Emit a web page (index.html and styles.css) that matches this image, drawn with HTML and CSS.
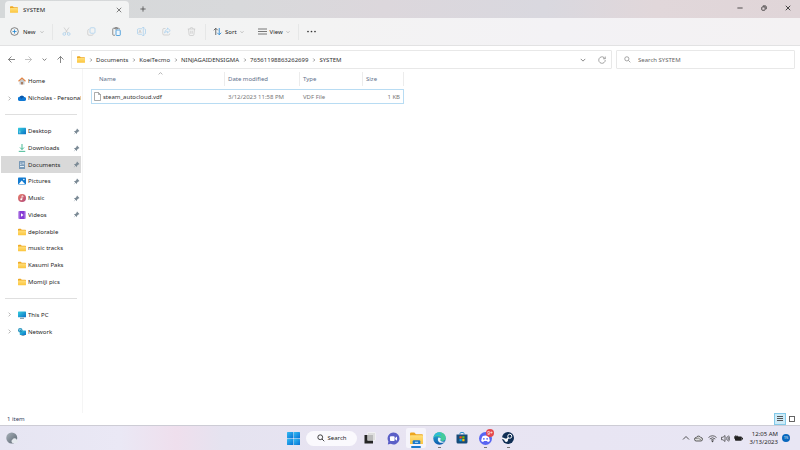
FILE: index.html
```html
<!DOCTYPE html>
<html lang="en">
<head>
<meta charset="utf-8">
<title>SYSTEM</title>
<link rel="stylesheet" href="styles.css">
</head>
<body>
<svg class="defs" aria-hidden="true">
  <linearGradient id="gFolder" x2="0" y2="1"><stop offset="0" stop-color="#ffdf7c"/><stop offset="1" stop-color="#fcc53d"/></linearGradient>
  <linearGradient id="gBlue" x2="1" y2="1"><stop offset="0" stop-color="#36d0e0"/><stop offset="1" stop-color="#0a6fc4"/></linearGradient>
  <linearGradient id="gWin" x2="1" y2="1"><stop offset="0" stop-color="#35bdf3"/><stop offset="1" stop-color="#0671d4"/></linearGradient>
  <linearGradient id="gEdge" x2="0" y2="1"><stop offset="0" stop-color="#2cb9d8"/><stop offset="1" stop-color="#0c55ad"/></linearGradient>
  <linearGradient id="gMusic" x2="1" y2="1"><stop offset="0" stop-color="#e8806a"/><stop offset="1" stop-color="#b3487a"/></linearGradient>
  <linearGradient id="gMoon" x2="1" y2="1"><stop offset="0" stop-color="#a8b1ba"/><stop offset="1" stop-color="#59646f"/></linearGradient>
  <symbol id="folder" viewBox="0 0 16 14"><path d="M0 2q0-1.500 1.500-1.500h4l2 2h7q1.500 0 1.500 1.500v3H0z" fill="#efa923"/><rect y="4" width="16" height="9.500" rx="1.200" fill="url(#gFolder)"/></symbol>
  <symbol id="chev" viewBox="0 0 8 8"><path d="M2.500 1l3 3-3 3" fill="none" stroke="currentColor"/></symbol>
  <symbol id="down" viewBox="0 0 8 8"><path d="M1 2.500l3 3 3-3" fill="none" stroke="currentColor"/></symbol>
  <symbol id="close" viewBox="0 0 8 8"><path d="M1 1l6 6M7 1L1 7" stroke="currentColor" stroke-width="1.100"/></symbol>
  <symbol id="search" viewBox="0 0 16 16"><path d="M10 10l4.500 4.500" stroke="currentColor" stroke-width="1.700"/><circle cx="6.500" cy="6.500" r="4.800" fill="none" stroke="currentColor" stroke-width="1.700"/></symbol>
  <symbol id="pin" viewBox="0 0 12 12"><path d="M7 1l4 4-1 1-1-.2L7 8l-.3 2.500L4.500 8.300 1 11.500l2.800-3.800L1.500 5.300 4 5l2.300-2L6 2z" fill="#7b8a95"/></symbol>
</svg>

<header class="titlebar">
  <div class="tab">
    <svg class="i-folder"><use href="#folder"/></svg>
    <span class="tab-name">SYSTEM</span>
    <button class="icon-btn tab-close" aria-label="Close tab"><svg class="i6"><use href="#close"/></svg></button>
  </div>
  <button class="icon-btn new-tab" aria-label="New tab"><svg class="i6" viewBox="0 0 8 8"><path d="M4 .5v7M.5 4h7" stroke="#444"/></svg></button>
  <div class="win-controls">
    <button class="icon-btn" aria-label="Minimize"><svg class="i6" viewBox="0 0 8 8"><path d="M.5 4h7" stroke="#222"/></svg></button>
    <button class="icon-btn" aria-label="Restore"><svg class="i6" viewBox="0 0 8 8"><rect x="1" y="2.500" width="4.500" height="4.500" rx="1" fill="none" stroke="#222"/><path d="M2.500 1.200h3.200q1.300 0 1.300 1.300v3" fill="none" stroke="#222"/></svg></button>
    <button class="icon-btn" aria-label="Close"><svg class="i6"><use href="#close"/></svg></button>
  </div>
</header>

<div class="toolbar">
  <button class="tool new"><svg class="i9" viewBox="0 0 18 18"><circle cx="9" cy="9" r="7.700" fill="none" stroke="#555" stroke-width="1.400"/><path d="M9 5v8M5 9h8" stroke="#1e85d0" stroke-width="1.600"/></svg>New<svg class="i4"><use href="#down"/></svg></button>
  <div class="actions">
    <button class="icon-btn" aria-label="Cut"><svg class="i9" viewBox="0 0 18 18" fill="none" stroke-width="1.400"><path d="M4 1l7.500 11M14 1L6.500 12" stroke="#c5c5c5"/><circle cx="4.500" cy="14" r="2.700" stroke="#a3cdec"/><circle cx="13.500" cy="14" r="2.700" stroke="#a3cdec"/></svg></button>
    <button class="icon-btn" aria-label="Copy"><svg class="i9" viewBox="0 0 18 18" fill="none" stroke-width="1.400"><rect x="6" y="1.500" width="10" height="11" rx="2" stroke="#a3cdec"/><path d="M4 5Q1.500 5 1.500 7v7q0 2.500 2.500 2.500h6q2 0 2.500-2" stroke="#c5c5c5"/></svg></button>
    <button class="icon-btn" aria-label="Paste"><svg class="i9" viewBox="0 0 18 18" fill="none" stroke-width="1.600"><path d="M6 16.500H3Q1.500 16.500 1.500 15V4Q1.500 2.500 3 2.500h10.500q1.500 0 1.500 2" stroke="#777"/><rect x="5.500" y="1" width="5.500" height="3" rx="1" stroke="#777"/><rect x="8" y="6" width="8.500" height="11" rx="1.200" stroke="#3490d5" fill="#eef6fc"/></svg></button>
    <button class="icon-btn" aria-label="Rename"><svg class="i9" viewBox="0 0 18 18" fill="none" stroke-width="1.400"><path d="M10 3.500H3Q1 3.500 1 5.500v7q0 2 2 2h7M14.500 3.500q2.500 0 2.500 2v7q0 2-2.500 2" stroke="#a3cdec"/><path d="M3.500 12L6 6l2.500 6M4.500 10h3" stroke="#c5c5c5"/><path d="M12.500 1v16M10.500 1h4M10.500 17h4" stroke="#a3cdec"/></svg></button>
    <button class="icon-btn" aria-label="Share"><svg class="i9" viewBox="0 0 18 18" fill="none" stroke-width="1.400"><path d="M7 3H4Q1.500 3 1.500 5.500v8Q1.500 16 4 16h9q2.500 0 2.500-3" stroke="#c5c5c5"/><path d="M11 2l5.500 5-5.500 5V9q-4 0-6 3 .5-6.500 6-7.500z" stroke="#a3cdec"/></svg></button>
    <button class="icon-btn" aria-label="Delete"><svg class="i9" viewBox="0 0 18 18" fill="none" stroke="#c5c5c5" stroke-width="1.400"><path d="M1.500 4h15M6 4q0-3 3-3t3 3M3 4l1.200 11q.2 2 2 2h5.600q1.800 0 2-2L15 4M7.500 7.500v6M10.500 7.500v6"/></svg></button>
  </div>
  <div class="views">
    <button class="tool"><svg class="i9" viewBox="0 0 18 18" fill="none" stroke-width="1.700"><path d="M5.500 16V2.500M1.500 6.500l4-4 4 4" stroke="#555"/><path d="M12.500 2v13.500M8.500 11.500l4 4 4-4" stroke="#2687d2"/></svg>Sort<svg class="i4"><use href="#down"/></svg></button>
    <button class="tool"><svg class="i9" viewBox="0 0 18 18"><path d="M0 4h18M0 9h18M0 14h18" stroke="#777" stroke-width="2"/></svg>View<svg class="i4"><use href="#down"/></svg></button>
  </div>
  <button class="icon-btn more" aria-label="See more"><svg class="i9" viewBox="0 0 18 18" fill="#333"><circle cx="2" cy="9" r="1.700"/><circle cx="9" cy="9" r="1.700"/><circle cx="16" cy="9" r="1.700"/></svg></button>
</div>

<nav class="navbar" aria-label="Navigation">
  <div class="arrows">
    <button class="icon-btn" aria-label="Back"><svg class="i7" viewBox="0 0 14 14" fill="none" stroke="#555" stroke-width="1.400"><path d="M14 7H1M7 1L1 7l6 6"/></svg></button>
    <button class="icon-btn" aria-label="Forward"><svg class="i7" viewBox="0 0 14 14" fill="none" stroke="#aaa" stroke-width="1.400"><path d="M0 7h13M7 1l6 6-6 6"/></svg></button>
    <button class="icon-btn" aria-label="Recent"><svg class="i5"><use href="#down"/></svg></button>
    <button class="icon-btn" aria-label="Up"><svg class="i7" viewBox="0 0 14 14" fill="none" stroke="#555" stroke-width="1.400"><path d="M7 14V1M1 7l6-6 6 6"/></svg></button>
  </div>
  <div class="address">
    <svg class="i-folder"><use href="#folder"/></svg>
    <svg class="i4 sep"><use href="#chev"/></svg><a href="#">Documents</a>
    <svg class="i4 sep"><use href="#chev"/></svg><a href="#">KoeiTecmo</a>
    <svg class="i4 sep"><use href="#chev"/></svg><a href="#">NINJAGAIDENSIGMA</a>
    <svg class="i4 sep"><use href="#chev"/></svg><a href="#">76561198863262699</a>
    <svg class="i4 sep"><use href="#chev"/></svg><a href="#">SYSTEM</a>
    <button class="icon-btn history" aria-label="Previous locations"><svg class="i6"><use href="#down"/></svg></button>
    <button class="icon-btn" aria-label="Refresh"><svg class="i8" viewBox="0 0 16 16" fill="none" stroke="#777" stroke-width="1.300"><path d="M14.500 8A6.500 6.500 0 1 1 12 3l2 2M14.500 1v4.500H10"/></svg></button>
  </div>
  <label class="search"><svg class="i7"><use href="#search"/></svg><input type="text" aria-label="Search SYSTEM" placeholder="Search SYSTEM"></label>
</nav>

<main class="main">
  <nav class="sidebar" aria-label="Folders">
    <div class="tree">
      <a class="item" href="#"><svg class="ico" viewBox="0 0 16 16"><path d="M3 7v8h3.500v-5h3v5H13V7L8 3z" fill="#c5cbd0"/><path d="M1 8.500L8 2l7 6.500" fill="none" stroke="#e28443" stroke-width="2.200"/><path d="M6.500 10h3v5h-3z" fill="#8f5734"/></svg><span>Home</span></a>
      <a class="item" href="#"><svg class="i5 expand"><use href="#chev"/></svg><svg class="ico" viewBox="0 0 16 16"><path d="M4 14a4 4 0 0 1-.3-8.500A5 5 0 0 1 12 6a4 4 0 0 1 .5 8z" fill="#0f78d4"/><path d="M3.700 5.500A5 5 0 0 1 12 6L6 10z" fill="#0b55a8"/></svg><span>Nicholas - Personal</span></a>
      <hr>
      <a class="item" href="#"><svg class="ico" viewBox="0 0 16 16"><rect y="1.500" width="16" height="13" rx="1" fill="url(#gBlue)"/><path d="M2 11.500h3M2 8.500h3" stroke="#d8f5ff"/></svg><span>Desktop</span><svg class="i7 pin"><use href="#pin"/></svg></a>
      <a class="item" href="#"><svg class="ico" viewBox="0 0 16 16" fill="none" stroke="#27ad83" stroke-width="1.700"><path d="M8 0v11M4 7l4 4 4-4M1.500 14.700h13"/></svg><span>Downloads</span><svg class="i7 pin"><use href="#pin"/></svg></a>
      <a class="item selected" href="#"><svg class="ico" viewBox="0 0 16 16"><rect x="2" width="12" height="16" rx="1" fill="#7899b7"/><path d="M4 4h3M4 7h3" stroke="#e5eef5" stroke-width="1.500"/><rect x="8.500" y="3" width="4" height="4" fill="#bcd0e0"/><path d="M4 11h8" stroke="#e5eef5" stroke-width="2"/></svg><span>Documents</span><svg class="i7 pin"><use href="#pin"/></svg></a>
      <a class="item" href="#"><svg class="ico" viewBox="0 0 16 16"><rect y="1" width="16" height="14" rx="1.500" fill="#137bd0"/><path d="M1.500 14L7.500 7l6.500 7z" fill="#fff"/><circle cx="11.700" cy="4.800" r="1.500" fill="#fff"/></svg><span>Pictures</span><svg class="i7 pin"><use href="#pin"/></svg></a>
      <a class="item" href="#"><svg class="ico" viewBox="0 0 16 16"><circle cx="8" cy="8" r="8" fill="url(#gMusic)"/><circle cx="6.500" cy="10.500" r="2" fill="#fff"/><path d="M8 10.500V3.500l3 1.800" fill="none" stroke="#fff" stroke-width="1.500"/></svg><span>Music</span><svg class="i7 pin"><use href="#pin"/></svg></a>
      <a class="item" href="#"><svg class="ico" viewBox="0 0 16 16"><rect x="1" width="14" height="16" rx="1.500" fill="#873bd5"/><path d="M3 1v14M13 1v14" stroke="#c9a0ef" stroke-width="1.500" stroke-dasharray="2"/><path d="M6 4.500l5 3.500-5 3.500z" fill="#fff"/></svg><span>Videos</span><svg class="i7 pin"><use href="#pin"/></svg></a>
      <a class="item" href="#"><svg class="ico"><use href="#folder"/></svg><span>deplorable</span></a>
      <a class="item" href="#"><svg class="ico"><use href="#folder"/></svg><span>music tracks</span></a>
      <a class="item" href="#"><svg class="ico"><use href="#folder"/></svg><span>Kasumi Paks</span></a>
      <a class="item" href="#"><svg class="ico"><use href="#folder"/></svg><span>Momiji pics</span></a>
      <hr>
      <a class="item" href="#"><svg class="i5 expand"><use href="#chev"/></svg><svg class="ico" viewBox="0 0 16 16"><rect y="1" width="16" height="11.500" rx="1" fill="url(#gBlue)"/><path d="M4 14.500h8" stroke="#55788f" stroke-width="1.800"/></svg><span>This PC</span></a>
      <a class="item" href="#"><svg class="i5 expand"><use href="#chev"/></svg><svg class="ico" viewBox="0 0 16 16"><rect x="3.500" y="5" width="12.500" height="9" rx="1" fill="url(#gBlue)"/><path d="M7 15.200h6" stroke="#55788f" stroke-width="1.500"/><circle cx="4.500" cy="4.500" r="4.500" fill="#2590bc"/><path d="M1.500 3.500q3-2 6 1M2 7q1-3 4-6" fill="none" stroke="#aee4f4"/></svg><span>Network</span></a>
    </div>
  </nav>
  <section class="content">
    <table class="files">
      <colgroup><col class="c-name"><col class="c-date"><col class="c-type"><col class="c-size"></colgroup>
      <thead><tr><th><svg class="sort-mark" viewBox="0 0 8 4"><path d="M1 3.500l3-3 3 3" fill="none" stroke="#888"/></svg>Name</th><th>Date modified</th><th>Type</th><th>Size</th></tr></thead>
      <tbody><tr><td class="name"><svg class="i-file" viewBox="0 0 14 18"><path d="M1 1h8l4 4v12H1zM9 1v4h4" fill="#fff" stroke="#888" stroke-width="1.400"/></svg>steam_autocloud.vdf</td><td>3/12/2023 11:58 PM</td><td>VDF File</td><td class="size">1 KB</td></tr></tbody>
    </table>
  </section>
</main>

<footer class="status">
  <span>1 item</span>
  <div class="modes">
    <button class="icon-btn mode on" aria-label="Details view"><svg class="i6" viewBox="0 0 6 6"><path d="M0 .5h6M0 2.500h6M0 4.500h6" stroke="#555"/></svg></button>
    <button class="icon-btn mode" aria-label="Large icons view"><svg class="i6" viewBox="0 0 12 12"><rect x="1" y="1" width="10" height="10" fill="none" stroke="#555" stroke-width="1.800"/></svg></button>
  </div>
</footer>

<div class="taskbar">
  <button class="icon-btn weather" aria-label="Weather"><svg class="i12" viewBox="0 0 24 24"><circle cx="11.500" cy="12" r="11" fill="url(#gMoon)"/><path d="M13 22a4 4 0 0 1 0-7 5 5 0 0 1 9 1 3.500 3.500 0 0 1-1 6z" fill="#e5e9ee"/></svg></button>
  <div class="apps">
    <button class="app" aria-label="Start"><svg class="i13" viewBox="0 0 24 24" fill="url(#gWin)"><rect width="11.600" height="11.600" rx="1"/><rect x="12.400" width="11.600" height="11.600" rx="1"/><rect y="12.400" width="11.600" height="11.600" rx="1"/><rect x="12.400" y="12.400" width="11.600" height="11.600" rx="1"/></svg></button>
    <button class="search-pill"><svg class="i8"><use href="#search"/></svg>Search</button>
    <button class="app" aria-label="Task view"><svg class="i12" viewBox="0 0 24 24"><rect x="7" y="1" width="16" height="16" rx="1" fill="#dedede" stroke="#fff"/><path d="M1 6h6v11h11v6H1z" fill="#252525"/><path d="M7 6h11v11H7z" fill="#bbb"/></svg></button>
    <button class="app" aria-label="Chat"><svg class="i13" viewBox="0 0 24 24"><path d="M12 1a11 11 0 1 1-5 20.800L1.500 23l1-5.500A11 11 0 0 1 12 1z" fill="#5b5fc7"/><rect x="5.500" y="8" width="8.500" height="8.500" rx="1.500" fill="#fff"/><path d="M15 11l3.500-2.500v7.500L15 13.500z" fill="#fff"/></svg></button>
    <button class="app active" aria-label="File Explorer"><svg class="i13" viewBox="0 0 24 24"><path d="M0 3q0-2 2-2h6l3 3h11q2 0 2 2v13H0z" fill="#eda51e"/><rect y="6" width="24" height="16" rx="1" fill="url(#gFolder)"/><path d="M5 22v-5q0-2 2-2h10q2 0 2 2v5z" fill="#1a78cb"/><path d="M9 19h6" stroke="#b7def9" stroke-width="2"/></svg></button>
    <button class="app open" aria-label="Edge"><svg class="i13" viewBox="0 0 24 24"><circle cx="12" cy="12" r="11.500" fill="url(#gEdge)"/><path d="M1 10C2 4 6.500.5 12 .5c7 0 11.500 5 11.500 10 0 4-3 6-6 6-3.500 0-4.500-1.500-3.500-3 1.500-3-1-5.500-4.500-5.500-4 0-7 1-8.500 2z" fill="#43cb9b"/><path d="M1 10C2.500 4 7 1 12 1l4 6Q8 2 1 10z" fill="#2bb8df"/><path d="M10 10c-3 5 1 10 6 10 3 0 5-1 6-2.500-5 1.500-10-1-8-4 1-2 0-3.500-4-3.500z" fill="#e8f2f8"/></svg></button>
    <button class="app" aria-label="Store"><svg class="i12" viewBox="0 0 24 24"><path d="M8 5V3q0-2 2-2h4q2 0 2 2v2" fill="none" stroke="#2e91cb" stroke-width="2"/><path d="M1 5h22v15q0 3-3 3H4q-3 0-3-3z" fill="#164b7a"/><path d="M7 8.500h4.500V13H7z" fill="#f25022"/><path d="M12.500 8.500H17V13h-4.500z" fill="#7fba00"/><path d="M7 14h4.500v4.500H7z" fill="#00a4ef"/><path d="M12.500 14H17v4.500h-4.500z" fill="#ffb900"/></svg></button>
    <button class="app open" aria-label="Discord"><svg class="i13" viewBox="0 0 24 24"><circle cx="12" cy="12" r="12" fill="#5865f2"/><path d="M7 7.500q5-2 10 0 3 4 3 9-2 2-4 2l-1-2H9l-1 2q-2 0-4-2 0-5 3-9z" fill="#fff"/><circle cx="9" cy="12.500" r="1.600" fill="#5865f2"/><circle cx="15" cy="12.500" r="1.600" fill="#5865f2"/></svg><span class="badge">9+</span></button>
    <button class="app open" aria-label="Steam"><svg class="i12" viewBox="0 0 24 24"><circle cx="12" cy="12" r="12" fill="#102f55"/><path d="M0 12l9 4 5-6" stroke="#fff" stroke-width="3" fill="none"/><circle cx="15.500" cy="8.500" r="4" fill="#102f55" stroke="#fff" stroke-width="2"/><circle cx="8.500" cy="16.500" r="3.300" fill="#fff"/></svg></button>
  </div>
  <div class="tray">
    <svg class="i8" viewBox="0 0 16 16"><path d="M2 11l6-6 6 6" fill="none" stroke="#222" stroke-width="1.500"/></svg>
    <svg class="i9" viewBox="0 0 18 18"><path d="M4.500 14a3.500 3.500 0 0 1 0-7 5 5 0 0 1 9 0 3.500 3.500 0 0 1 0 7z" fill="#ddd" stroke="#333" stroke-width="1.500"/><path d="M3 9q6-3 11 3" fill="none" stroke="#333"/></svg>
    <svg class="i9 gap" viewBox="0 0 18 18" fill="none" stroke="#333" stroke-width="1.500"><path d="M1 7q8-7 16 0M3.500 10q5.500-5 11 0M6 12.500q3-3 6 0"/><circle cx="9" cy="14.500" r="1" fill="#333"/></svg>
    <svg class="i9" viewBox="0 0 18 18" fill="none" stroke="#333" stroke-width="1.400"><path d="M1 6.500h3L8 3v12l-4-3.500H1zM10.500 6.500q2 2.500 0 5M13 4.500q3.500 4.500 0 9M15.300 3q4 6 0 12"/></svg>
    <svg class="i9" viewBox="0 0 18 18"><rect x="2" y="5" width="13.500" height="8.500" rx="1.500" fill="#222"/><path d="M17 7.500v3.500" stroke="#222" stroke-width="2"/><path d="M3 2v3M6 2v3M1 5h7v3q0 2-2 2H3Q1 10 1 8z" fill="#222" stroke="#222"/></svg>
    <div class="clock"><span>12:05 AM</span><span>3/13/2023</span></div>
    <span class="count">15</span>
  </div>
</div>
</body>
</html>
```
FILE: styles.css
```css
* { box-sizing: border-box; }
body {
  margin: 0;
  height: 100vh;
  display: flex;
  flex-direction: column;
  overflow: hidden;
  background: #fff;
  color: #252525;
  font: 6px/8px "Noto Sans", "Open Sans", sans-serif;
}
button, input { font: inherit; color: inherit; border: 0; padding: 0; margin: 0; background: none; }
a { color: inherit; text-decoration: none; }
svg { display: block; flex: none; }
.defs { position: absolute; width: 0; height: 0; }
.i4 { width: 4px; height: 4px; }
.i5 { width: 5px; height: 5px; }
.i6 { width: 6px; height: 6px; }
.i7 { width: 7px; height: 7px; }
.i8 { width: 8px; height: 8px; }
.i9 { width: 9px; height: 9px; }
.i12 { width: 12px; height: 12px; }
.i13 { width: 13px; height: 13px; }
.i-folder { width: 8px; height: 7px; }
.icon-btn { display: grid; place-items: center; flex: none; }

.titlebar {
  display: flex;
  height: 18px;
  flex: none;
  padding-left: 5px;
  background: linear-gradient(90deg, #d5d8d9 0%, #d8d9db 30%, #dcd7dc 48%, #d9d8df 68%, #e1d7da 82%, #e0d5d8 100%);
}
.tab {
  display: flex;
  align-items: center;
  width: 124px;
  margin-top: 1px;
  padding: 0 7px 0 5px;
  gap: 5px;
  border-radius: 4px 4px 0 0;
  background: #f2f3f3;
}
.tab-close { margin-left: auto; color: #666; }
.new-tab { width: 27px; }
.win-controls { display: flex; margin-left: auto; padding-bottom: 3px; }
.win-controls .icon-btn { width: 24px; }

.toolbar {
  display: flex;
  align-items: center;
  height: 28px;
  flex: none;
  padding-left: 10px;
  background: linear-gradient(90deg, #f2f3f3, #f3f3f3 40%, #f3f2f5 70%, #f4f2f3);
  border-bottom: 1px solid #e2e2e3;
}
.tool { display: flex; align-items: center; gap: 3px; }
.tool .i4 { color: #888; }
.new { width: 42px; gap: 4px; }
.actions {
  display: flex;
  height: 16px;
  gap: 16px;
  padding: 0 9px;
  border-left: 1px solid #e6e7e7;
}
.views {
  display: flex;
  height: 16px;
  gap: 14px;
  padding: 0 8px 0 7px;
  border-left: 1px solid #e6e7e7;
  border-right: 1px solid #e6e7e7;
}
.more { margin-left: 8px; }

.navbar { display: flex; flex: none; height: 23px; padding: 4px 5px 0 8px; color: #333; }
.arrows { display: flex; align-items: center; justify-content: space-between; width: 56px; margin-right: 7px; }
.address, .search { display: flex; align-items: center; border: 1px solid #e8e8e8; border-radius: 1px; background: #fff; }
.address { flex: 1; padding: 0 5px; }
.sep { margin: 0 3px 0 4px; }
.history { margin: 0 12px 0 auto; color: #666; }
.search { width: 179px; margin-left: 4px; padding-left: 7px; gap: 7px; color: #888; }
.search input { flex: 1; min-width: 0; outline: 0; }
.search input::placeholder { color: #666; opacity: 1; }

.main { display: flex; flex: 1; min-height: 0; }
.sidebar {
  width: 83px;
  flex: none;
  padding-top: 4px;
  border-right: 1px solid #f5f5f5;
}
.tree { display: grid; grid-template-rows: repeat(16, 1fr); height: 267px; }
.item {
  position: relative;
  display: grid;
  grid-template-columns: 11px 10px 1fr;
  align-items: center;
  margin: 0 1px;
  padding-left: 6px;
  white-space: nowrap;
}
.ico { grid-column: 2; width: 8px; height: 8px; }
.item span { grid-column: 3; overflow: hidden; }
.expand { grid-column: 1; grid-row: 1; color: #888; }
.pin { position: absolute; right: 1px; }
.selected { background: #d9d9d9; }
.tree hr { align-self: center; width: 72px; height: 1px; margin: 0 0 0 5px; border: 0; background: #dfdfdf; }

.content { flex: 1; padding: 3px 0 0 8px; }
.files { width: 313px; border-collapse: separate; border-spacing: 0; table-layout: fixed; }
.c-name { width: 134px; }
.c-date { width: 75px; }
.c-type { width: 63px; }
.c-size { width: 41px; }
.files th { position: relative; height: 14px; padding: 0 3px; border-right: 1px solid #ececec; text-align: left; font-weight: 400; color: #61708a; }
.files th:first-child { padding-left: 8px; }
.sort-mark { position: absolute; top: 0; left: 67px; width: 5px; height: 3px; }
.files tbody { color: #777; }
.files tbody::before { content: ""; display: block; height: 3px; }
.files td { height: 15px; padding: 0 3px; border: solid #b8dcf3; border-width: 1px 0; white-space: nowrap; }
.files .name { display: flex; align-items: center; gap: 2px; padding-left: 2px; border-left-width: 1px; color: #333; }
.i-file { width: 7px; height: 9px; }
.files .size { text-align: right; border-right-width: 1px; }

.status { display: flex; align-items: center; height: 12px; flex: none; padding: 0 2px 0 7px; color: #35415d; }
.modes { display: flex; margin-left: auto; }
.mode { width: 12px; height: 12px; }
.on { background: #cdebf8; border: 1px solid #83c9e8; }

.taskbar {
  display: grid;
  grid-template-columns: 1fr auto 1fr;
  align-items: center;
  height: 25px;
  flex: none;
  padding: 0 10px 0 6px;
  border-top: 1px solid #cdccd5;
  background: linear-gradient(90deg, #e6e5f2 0%, #eae8f5 15%, #efdfed 22%, #e5e3f0 28%, #e8e4f2 45%, #e8e6f4 100%);
}
.weather { justify-self: start; }
.apps { display: flex; align-items: center; gap: 3px; margin-left: 5px; }
.app { position: relative; display: grid; place-items: center; width: 20px; height: 20px; border-radius: 2px; }
.active { background: #f5f4fb; }
.active::after, .open::after { content: ""; position: absolute; bottom: 0; width: 3px; height: 1px; background: #777; }
.active::after { width: 10px; height: 2px; border-radius: 1px; background: #1a78cb; }
.search-pill { display: flex; align-items: center; justify-content: center; gap: 3px; width: 51px; height: 15px; border-radius: 8px; background: #faf9fd; }
.badge { position: absolute; top: 1px; right: 1px; width: 8px; height: 8px; border-radius: 4px; background: #e5484d; color: #fff; font-size: 5px; text-align: center; }
.tray { display: flex; align-items: center; justify-content: flex-end; gap: 4px; }
.gap { margin-left: 1px; }
.clock { display: flex; flex-direction: column; width: 31px; text-align: right; }
.count { width: 8px; height: 8px; border-radius: 4px; background: #0867bd; color: #fff; font-size: 4px; text-align: center; }
```
